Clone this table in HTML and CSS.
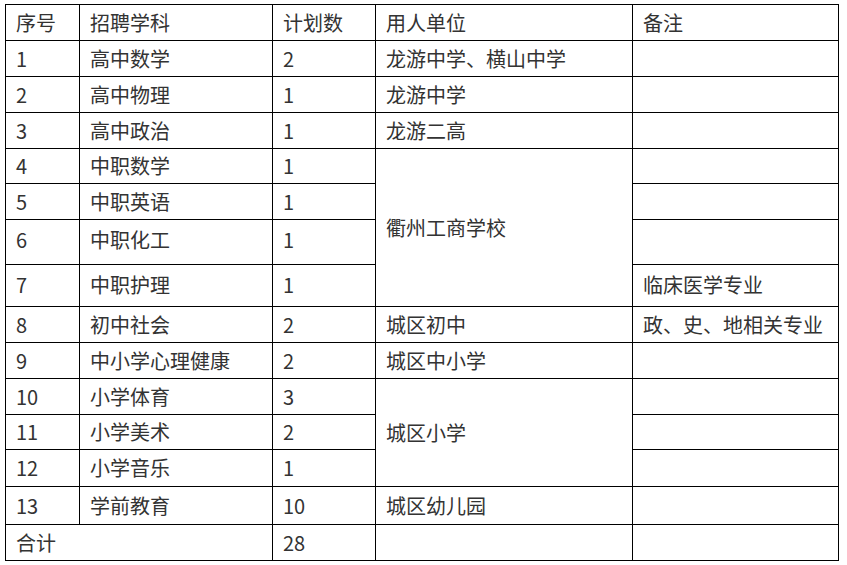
FILE: index.html
```html
<!DOCTYPE html>
<html lang="zh">
<head>
<meta charset="utf-8">
<title>招聘计划</title>
<link rel="stylesheet" href="styles.css">
</head>
<body>
<div class="wrap">
<table class="plan">
<colgroup>
<col class="c1"><col class="c2"><col class="c3"><col class="c4"><col class="c5">
</colgroup>
<tr class="h36"><td>序号</td><td>招聘学科</td><td>计划数</td><td>用人单位</td><td>备注</td></tr>
<tr class="h36"><td>1</td><td>高中数学</td><td>2</td><td>龙游中学、横山中学</td><td></td></tr>
<tr class="h36"><td>2</td><td>高中物理</td><td>1</td><td>龙游中学</td><td></td></tr>
<tr class="h36"><td>3</td><td>高中政治</td><td>1</td><td>龙游二高</td><td></td></tr>
<tr class="h35"><td>4</td><td>中职数学</td><td>1</td><td rowspan="4">衢州工商学校</td><td></td></tr>
<tr class="h36"><td>5</td><td>中职英语</td><td>1</td><td></td></tr>
<tr class="h45"><td>6</td><td>中职化工</td><td>1</td><td></td></tr>
<tr class="h42"><td>7</td><td>中职护理</td><td>1</td><td>临床医学专业</td></tr>
<tr class="h36"><td>8</td><td>初中社会</td><td>2</td><td>城区初中</td><td>政、史、地相关专业</td></tr>
<tr class="h36"><td>9</td><td>中小学心理健康</td><td>2</td><td>城区中小学</td><td></td></tr>
<tr class="h36"><td>10</td><td>小学体育</td><td>3</td><td rowspan="3">城区小学</td><td></td></tr>
<tr class="h35"><td>11</td><td>小学美术</td><td>2</td><td></td></tr>
<tr class="h37"><td>12</td><td>小学音乐</td><td>1</td><td></td></tr>
<tr class="h38"><td>13</td><td>学前教育</td><td>10</td><td>城区幼儿园</td><td></td></tr>
<tr class="h36"><td colspan="2">合计</td><td>28</td><td></td><td></td></tr>
</table>
</div>
</body>
</html>
```
FILE: styles.css
```css
html, body {
  margin: 0;
  padding: 0;
  background: #ffffff;
}
.wrap {
  padding: 4px 0 0 5px;
}
.plan {
  border-collapse: collapse;
  table-layout: fixed;
  width: 833px;
  font-family: "Noto Sans CJK SC", "Microsoft YaHei", sans-serif;
  font-size: 20px;
  line-height: 24px;
  color: #333333;
}
.plan td {
  border: 1px solid #000000;
  padding: 0 10px;
  vertical-align: middle;
  text-align: left;
  white-space: nowrap;
  overflow: hidden;
}
.c1 { width: 74px; }
.c2 { width: 193px; }
.c3 { width: 103px; }
.c4 { width: 257px; }
.c5 { width: 206px; }
.h35 { height: 35px; }
.h36 { height: 36px; }
.h37 { height: 37px; }
.h38 { height: 38px; }
.h42 { height: 42px; }
.h45 { height: 45px; }
.h45 td { padding-bottom: 5px; }
.h42 td { padding-bottom: 2px; }
.h42 td[rowspan], .h45 td[rowspan] { padding-bottom: 0; }
```
